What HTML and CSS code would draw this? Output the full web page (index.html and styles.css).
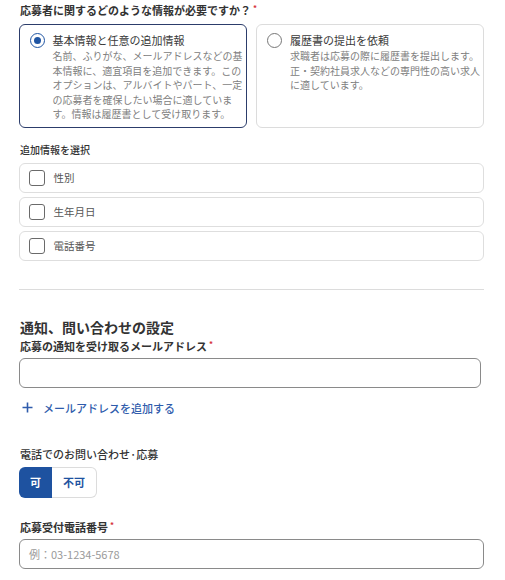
FILE: index.html
```html
<!DOCTYPE html>
<html lang="ja">
<head>
<meta charset="utf-8">
<link rel="stylesheet" href="styles.css">
</head>
<body>
<div class="page">
  <div class="q-title">応募者に関するどのような情報が必要ですか？<span class="req">*</span></div>
  <div class="cards">
    <label class="card selected">
      <span class="radio on"></span>
      <span class="card-body">
        <span class="card-title">基本情報と任意の追加情報</span>
        <span class="card-desc">名前、ふりがな、メールアドレスなどの基本情報に、適宜項目を追加できます。このオプションは、アルバイトやパート、一定の応募者を確保したい場合に適しています。情報は履歴書として受け取ります。</span>
      </span>
    </label>
    <label class="card">
      <span class="radio"></span>
      <span class="card-body">
        <span class="card-title">履歴書の提出を依頼</span>
        <span class="card-desc">求職者は応募の際に履歴書を提出します。正・契約社員求人などの専門性の高い求人に適しています。</span>
      </span>
    </label>
  </div>

  <div class="sub-label">追加情報を選択</div>
  <div class="checks">
    <label class="check-row"><span class="box"></span><span class="check-text">性別</span></label>
    <label class="check-row"><span class="box"></span><span class="check-text">生年月日</span></label>
    <label class="check-row"><span class="box"></span><span class="check-text">電話番号</span></label>
  </div>

  <hr class="divider">

  <h2 class="section-title">通知、問い合わせの設定</h2>
  <div class="field-label">応募の通知を受け取るメールアドレス<span class="req">*</span></div>
  <div class="input email"></div>
  <div class="add-link">
    <svg class="plus" width="11" height="11" viewBox="0 0 11 11"><path d="M5.5 0.5v10M0.5 5.5h10" stroke="#2f5cac" stroke-width="1.6" fill="none"/></svg>
    <span>メールアドレスを追加する</span>
  </div>

  <div class="field-label phone-q">電話でのお問い合わせ·応募</div>
  <div class="toggle">
    <span class="seg on">可</span>
    <span class="seg off">不可</span>
  </div>

  <div class="field-label phone-label">応募受付電話番号<span class="req">*</span></div>
  <div class="input phone"><span class="placeholder">例：03-1234-5678</span></div>
</div>
</body>
</html>
```
FILE: styles.css
```css
* { box-sizing: border-box; }
body {
  margin: 0;
  background: #fff;
  font-family: "Noto Sans CJK JP", "Noto Sans", sans-serif;
  color: #333;
}
.page {
  padding: 2px 21px 0 19px;
}
.q-title {
  font-size: 11px;
  line-height: 16px;
  font-weight: 700;
  color: #333;
  padding-left: 1px;
}
.req {
  color: #d6313a;
  font-size: 8px;
  vertical-align: top;
  margin-left: 2px;
  line-height: 12px;
}
.cards {
  margin-top: 6px;
  display: grid;
  grid-template-columns: 1fr 1fr;
  gap: 9px;
}
.card {
  height: 104px;
  border: 1px solid #dcdcdc;
  border-radius: 6px;
  display: grid;
  grid-template-columns: 15px 1fr;
  column-gap: 8px;
  padding: 7px 2px 6px 10px;
  align-items: start;
}
.card.selected {
  border: 1.5px solid #2c3d6b;
  padding-left: 9.5px;
}
.radio {
  width: 15px;
  height: 15px;
  border: 1.3px solid #777;
  border-radius: 50%;
  margin-top: 1px;
  position: relative;
  background: #fff;
}
.radio.on {
  border: 1.5px solid #1f55a3;
}
.radio.on::after {
  content: "";
  position: absolute;
  left: 50%;
  top: 50%;
  width: 7px;
  height: 7px;
  margin: -3.5px 0 0 -3.5px;
  border-radius: 50%;
  background: #1f55a3;
}
.card-body {
  display: flex;
  flex-direction: column;
}
.card-title {
  font-size: 11px;
  line-height: 16px;
  color: #3a3a3a;
}
.card-desc {
  font-size: 10px;
  line-height: 14.5px;
  color: #808080;
  margin-top: 1px;
}
.sub-label {
  margin-top: 15px;
  font-size: 10px;
  line-height: 14px;
  color: #333;
  font-weight: 500;
  padding-left: 1px;
}
.checks {
  margin-top: 6px;
  display: flex;
  flex-direction: column;
  gap: 4.5px;
}
.check-row {
  height: 29.5px;
  border: 1px solid #dedede;
  border-radius: 6px;
  display: flex;
  align-items: center;
  padding-left: 9px;
  gap: 9px;
}
.box {
  width: 15.5px;
  height: 15.5px;
  border: 1.2px solid #6a6a6a;
  border-radius: 3px;
}
.check-text {
  font-size: 10.5px;
  color: #555;
  line-height: 14px;
}
.divider {
  margin: 28px 0 0;
  border: 0;
  border-top: 1px solid #dcdcdc;
  height: 0;
}
.section-title {
  margin: 27px 0 0;
  font-size: 14px;
  line-height: 20px;
  font-weight: 700;
  color: #333;
  padding-left: 1px;
}
.field-label {
  font-size: 11px;
  line-height: 16px;
  font-weight: 700;
  color: #333;
  padding-left: 1px;
  margin-top: 1px;
}
.input {
  margin-top: 4px;
  height: 30px;
  border: 1px solid #8a8a8a;
  border-radius: 6px;
  display: flex;
  align-items: center;
  padding-left: 9px;
}
.input.email {
  width: 462px;
}
.input.phone {
  margin-top: 4px;
}
.placeholder {
  font-size: 11px;
  color: #9a9a9a;
}
.add-link {
  margin-top: 12px;
  display: flex;
  align-items: center;
  gap: 10px;
  padding-left: 3px;
  font-size: 11px;
  line-height: 16px;
  font-weight: 500;
  color: #2f5cac;
}
.plus { display: block; }
.field-label.phone-q {
  margin-top: 30px;
  font-weight: 500;
}
.toggle {
  margin-top: 5px;
  display: flex;
  width: 78px;
  height: 31px;
}
.seg {
  display: flex;
  align-items: center;
  justify-content: center;
  font-size: 11px;
  font-weight: 700;
}
.seg.on {
  width: 33px;
  background: #1e52a0;
  color: #fff;
  border-radius: 6px 0 0 6px;
}
.seg.off {
  flex: 1;
  background: #fff;
  color: #1e52a0;
  border: 1px solid #dcdcdc;
  border-left: 0;
  border-radius: 0 6px 6px 0;
}
.field-label.phone-label {
  margin-top: 21px;
}
```
